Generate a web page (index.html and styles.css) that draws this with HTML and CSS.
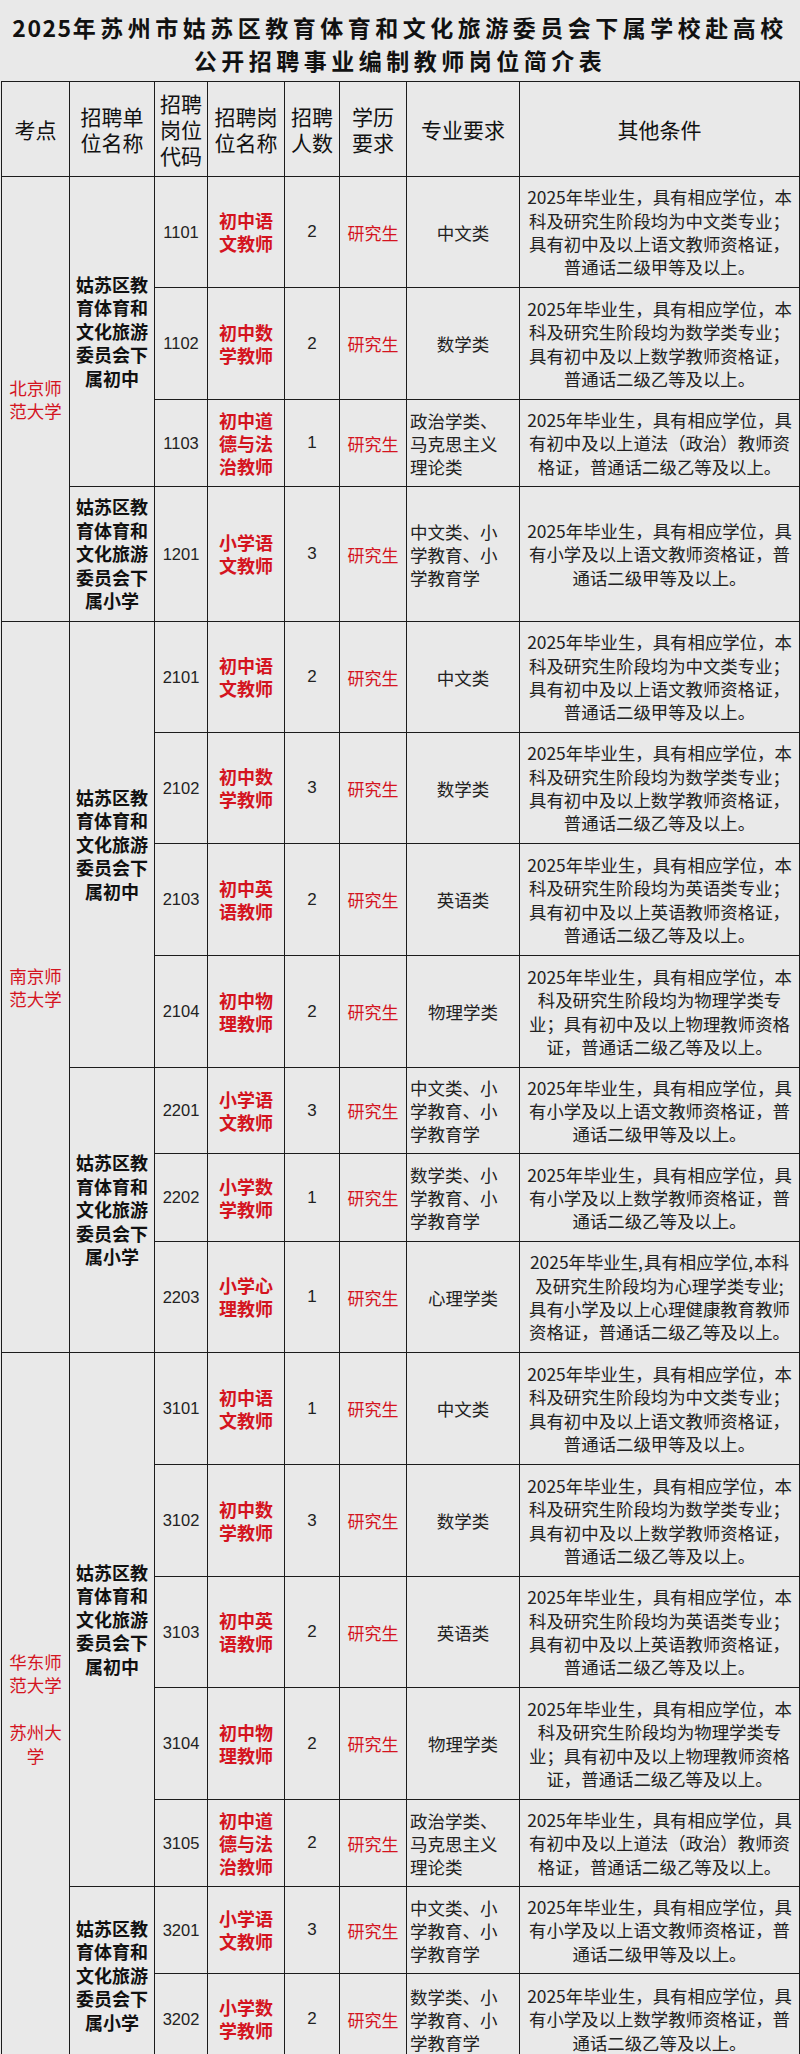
FILE: index.html
```
<!DOCTYPE html>
<html lang="zh-CN">
<head>
<meta charset="utf-8">
<title>公开招聘事业编制教师岗位简介表</title>
<link rel="stylesheet" href="styles.css">
</head>
<body>
<div class="page">
  <h1 class="title"><span class="tl"><span class="digits">2025</span>年苏州市姑苏区教育体育和文化旅游委员会下属学校赴高校</span><span class="tl">公开招聘事业编制教师岗位简介表</span></h1>
  <table class="grid">
    <colgroup>
      <col class="c1"><col class="c2"><col class="c3"><col class="c4"><col class="c5"><col class="c6"><col class="c7"><col class="c8">
    </colgroup>
    <thead>
      <tr class="h-head">
        <th>考点</th>
        <th>招聘单<br>位名称</th>
        <th>招聘<br>岗位<br>代码</th>
        <th>招聘岗<br>位名称</th>
        <th>招聘<br>人数</th>
        <th>学历<br>要求</th>
        <th>专业要求</th>
        <th>其他条件</th>
      </tr>
    </thead>
    <tbody>
      <!-- 北京师范大学 -->
      <tr class="h111">
        <td class="site" rowspan="4">北京师<br>范大学</td>
        <td class="unit" rowspan="3">姑苏区教<br>育体育和<br>文化旅游<br>委员会下<br>属初中</td>
        <td class="code">1101</td>
        <td class="post">初中语<br>文教师</td>
        <td class="num">2</td>
        <td class="edu">研究生</td>
        <td class="major">中文类</td>
        <td class="other">2025年毕业生，具有相应学位，本<br>科及研究生阶段均为中文类专业；<br>具有初中及以上语文教师资格证，<br>普通话二级甲等及以上。</td>
      </tr>
      <tr class="h112">
        <td class="code">1102</td>
        <td class="post">初中数<br>学教师</td>
        <td class="num">2</td>
        <td class="edu">研究生</td>
        <td class="major">数学类</td>
        <td class="other">2025年毕业生，具有相应学位，本<br>科及研究生阶段均为数学类专业；<br>具有初中及以上数学教师资格证，<br>普通话二级乙等及以上。</td>
      </tr>
      <tr class="h87">
        <td class="code">1103</td>
        <td class="post">初中道<br>德与法<br>治教师</td>
        <td class="num">1</td>
        <td class="edu">研究生</td>
        <td class="major left">政治学类、<br>马克思主义<br>理论类</td>
        <td class="other">2025年毕业生，具有相应学位，具<br>有初中及以上道法（政治）教师资<br>格证，普通话二级乙等及以上。</td>
      </tr>
      <tr class="h135">
        <td class="unit">姑苏区教<br>育体育和<br>文化旅游<br>委员会下<br>属小学</td>
        <td class="code">1201</td>
        <td class="post">小学语<br>文教师</td>
        <td class="num">3</td>
        <td class="edu">研究生</td>
        <td class="major left">中文类、小<br>学教育、小<br>学教育学</td>
        <td class="other">2025年毕业生，具有相应学位，具<br>有小学及以上语文教师资格证，普<br>通话二级甲等及以上。</td>
      </tr>

      <!-- 南京师范大学 -->
      <tr class="h111">
        <td class="site" rowspan="7">南京师<br>范大学</td>
        <td class="unit" rowspan="4">姑苏区教<br>育体育和<br>文化旅游<br>委员会下<br>属初中</td>
        <td class="code">2101</td>
        <td class="post">初中语<br>文教师</td>
        <td class="num">2</td>
        <td class="edu">研究生</td>
        <td class="major">中文类</td>
        <td class="other">2025年毕业生，具有相应学位，本<br>科及研究生阶段均为中文类专业；<br>具有初中及以上语文教师资格证，<br>普通话二级甲等及以上。</td>
      </tr>
      <tr class="h111">
        <td class="code">2102</td>
        <td class="post">初中数<br>学教师</td>
        <td class="num">3</td>
        <td class="edu">研究生</td>
        <td class="major">数学类</td>
        <td class="other">2025年毕业生，具有相应学位，本<br>科及研究生阶段均为数学类专业；<br>具有初中及以上数学教师资格证，<br>普通话二级乙等及以上。</td>
      </tr>
      <tr class="h112">
        <td class="code">2103</td>
        <td class="post">初中英<br>语教师</td>
        <td class="num">2</td>
        <td class="edu">研究生</td>
        <td class="major">英语类</td>
        <td class="other">2025年毕业生，具有相应学位，本<br>科及研究生阶段均为英语类专业；<br>具有初中及以上英语教师资格证，<br>普通话二级乙等及以上。</td>
      </tr>
      <tr class="h112">
        <td class="code">2104</td>
        <td class="post">初中物<br>理教师</td>
        <td class="num">2</td>
        <td class="edu">研究生</td>
        <td class="major">物理学类</td>
        <td class="other">2025年毕业生，具有相应学位，本<br>科及研究生阶段均为物理学类专<br>业；具有初中及以上物理教师资格<br>证，普通话二级乙等及以上。</td>
      </tr>
      <tr class="h86">
        <td class="unit" rowspan="3">姑苏区教<br>育体育和<br>文化旅游<br>委员会下<br>属小学</td>
        <td class="code">2201</td>
        <td class="post">小学语<br>文教师</td>
        <td class="num">3</td>
        <td class="edu">研究生</td>
        <td class="major left">中文类、小<br>学教育、小<br>学教育学</td>
        <td class="other">2025年毕业生，具有相应学位，具<br>有小学及以上语文教师资格证，普<br>通话二级甲等及以上。</td>
      </tr>
      <tr class="h88">
        <td class="code">2202</td>
        <td class="post">小学数<br>学教师</td>
        <td class="num">1</td>
        <td class="edu">研究生</td>
        <td class="major left">数学类、小<br>学教育、小<br>学教育学</td>
        <td class="other">2025年毕业生，具有相应学位，具<br>有小学及以上数学教师资格证，普<br>通话二级乙等及以上。</td>
      </tr>
      <tr class="h111">
        <td class="code">2203</td>
        <td class="post">小学心<br>理教师</td>
        <td class="num">1</td>
        <td class="edu">研究生</td>
        <td class="major">心理学类</td>
        <td class="other">2025年毕业生,&#8202;具有相应学位,&#8202;本科<br>及研究生阶段均为心理学类专业;<br>具有小学及以上心理健康教育教师<br>资格证，普通话二级乙等及以上。</td>
      </tr>

      <!-- 华东师范大学 / 苏州大学 -->
      <tr class="h112">
        <td class="site" rowspan="7">华东师<br>范大学<br><br>苏州大<br>学</td>
        <td class="unit" rowspan="5">姑苏区教<br>育体育和<br>文化旅游<br>委员会下<br>属初中</td>
        <td class="code">3101</td>
        <td class="post">初中语<br>文教师</td>
        <td class="num">1</td>
        <td class="edu">研究生</td>
        <td class="major">中文类</td>
        <td class="other">2025年毕业生，具有相应学位，本<br>科及研究生阶段均为中文类专业；<br>具有初中及以上语文教师资格证，<br>普通话二级甲等及以上。</td>
      </tr>
      <tr class="h112">
        <td class="code">3102</td>
        <td class="post">初中数<br>学教师</td>
        <td class="num">3</td>
        <td class="edu">研究生</td>
        <td class="major">数学类</td>
        <td class="other">2025年毕业生，具有相应学位，本<br>科及研究生阶段均为数学类专业；<br>具有初中及以上数学教师资格证，<br>普通话二级乙等及以上。</td>
      </tr>
      <tr class="h111">
        <td class="code">3103</td>
        <td class="post">初中英<br>语教师</td>
        <td class="num">2</td>
        <td class="edu">研究生</td>
        <td class="major">英语类</td>
        <td class="other">2025年毕业生，具有相应学位，本<br>科及研究生阶段均为英语类专业；<br>具有初中及以上英语教师资格证，<br>普通话二级乙等及以上。</td>
      </tr>
      <tr class="h112">
        <td class="code">3104</td>
        <td class="post">初中物<br>理教师</td>
        <td class="num">2</td>
        <td class="edu">研究生</td>
        <td class="major">物理学类</td>
        <td class="other">2025年毕业生，具有相应学位，本<br>科及研究生阶段均为物理学类专<br>业；具有初中及以上物理教师资格<br>证，普通话二级乙等及以上。</td>
      </tr>
      <tr class="h87">
        <td class="code">3105</td>
        <td class="post">初中道<br>德与法<br>治教师</td>
        <td class="num">2</td>
        <td class="edu">研究生</td>
        <td class="major left">政治学类、<br>马克思主义<br>理论类</td>
        <td class="other">2025年毕业生，具有相应学位，具<br>有初中及以上道法（政治）教师资<br>格证，普通话二级乙等及以上。</td>
      </tr>
      <tr class="h87">
        <td class="unit" rowspan="2">姑苏区教<br>育体育和<br>文化旅游<br>委员会下<br>属小学</td>
        <td class="code">3201</td>
        <td class="post">小学语<br>文教师</td>
        <td class="num">3</td>
        <td class="edu">研究生</td>
        <td class="major left">中文类、小<br>学教育、小<br>学教育学</td>
        <td class="other">2025年毕业生，具有相应学位，具<br>有小学及以上语文教师资格证，普<br>通话二级甲等及以上。</td>
      </tr>
      <tr class="h91">
        <td class="code">3202</td>
        <td class="post">小学数<br>学教师</td>
        <td class="num">2</td>
        <td class="edu">研究生</td>
        <td class="major left">数学类、小<br>学教育、小<br>学教育学</td>
        <td class="other">2025年毕业生，具有相应学位，具<br>有小学及以上数学教师资格证，普<br>通话二级乙等及以上。</td>
      </tr>
    </tbody>
  </table>
</div>
</body>
</html>
```

FILE: styles.css
```
html, body {
  margin: 0;
  padding: 0;
  background: #e9e9e9;
}

body {
  font-family: "Noto Sans CJK SC", "Noto Sans", sans-serif;
  color: #1a1a1a;
}

.page {
  width: 800px;
}

.title {
  margin: 0;
  padding: 11px 0 4px;
  font-size: 23px;
  line-height: 33px;
  font-weight: 700;
  text-align: center;
  color: #111;
  letter-spacing: 4.5px;
}

.tl {
  display: block;
  height: 33px;
}

.digits {
  letter-spacing: 1.5px;
}

.grid {
  margin-left: 1px;
  width: 798px;
  table-layout: fixed;
  border-collapse: collapse;
}

.c1 { width: 68px; }
.c2 { width: 85px; }
.c3 { width: 53px; }
.c4 { width: 77px; }
.c5 { width: 55px; }
.c6 { width: 67px; }
.c7 { width: 113px; }
.c8 { width: 280px; }

.grid th,
.grid td {
  border: 1.5px solid #1c1c1c;
  padding: 0;
  vertical-align: middle;
  text-align: center;
  white-space: nowrap;
}

.grid th {
  font-size: 21px;
  line-height: 26px;
  font-weight: 400;
  color: #111;
}

.h-head { height: 95px; }
.h86 { height: 86px; }
.h87 { height: 87px; }
.h88 { height: 88px; }
.h91 { height: 91px; }
.h111 { height: 111px; }
.h112 { height: 112px; }
.h135 { height: 135px; }

.site {
  font-size: 17.5px;
  line-height: 23.5px;
  color: #d4141f;
}

.unit {
  font-size: 18px;
  line-height: 23.5px;
  font-weight: 700;
  color: #111;
}

.code {
  font-family: "Liberation Sans", "Noto Sans", sans-serif;
  font-size: 16.5px;
  color: #222;
}

.post {
  font-size: 18px;
  line-height: 23px;
  font-weight: 700;
  color: #d4141f;
}

.num {
  font-family: "Liberation Sans", "Noto Sans", sans-serif;
  font-size: 17px;
  color: #222;
}

.edu {
  font-size: 17px;
  color: #d4141f;
}

.major {
  font-size: 17.5px;
  line-height: 23px;
  color: #222;
}

.major.left {
  text-align: left;
  padding-left: 3px;
}

.other {
  font-size: 17.4px;
  line-height: 23.3px;
  text-align: left;
  padding-left: 3px;
  color: #222;
}
```
